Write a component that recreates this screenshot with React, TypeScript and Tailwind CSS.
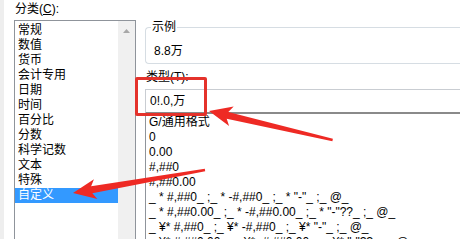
import React from 'react';

const categories = [
  '常规',
  '数值',
  '货币',
  '会计专用',
  '日期',
  '时间',
  '百分比',
  '分数',
  '科学记数',
  '文本',
  '特殊',
  '自定义',
];

const formats = [
  'G/通用格式',
  '0',
  '0.00',
  '#,##0',
  '#,##0.00',
  '_ * #,##0_ ;_ * -#,##0_ ;_ * "-"_ ;_ @_',
  '_ * #,##0.00_ ;_ * -#,##0.00_ ;_ * "-"??_ ;_ @_',
  '_ ¥* #,##0_ ;_ ¥* -#,##0_ ;_ ¥* "-"_ ;_ @_',
  '_ ¥* #,##0.00_ ;_ ¥* -#,##0.00_ ;_ ¥* "-"??_ ;_ @_',
];

function Arrow({ x, y, angle, length }: { x: number; y: number; angle: number; length: number }) {
  return (
    <g transform={`translate(${x},${y}) rotate(${angle})`}>
      <polygon
        points={`0,0 23,-10 19,-3.5 ${length},-1.2 ${length},1.2 19,3.5 23,10`}
        fill="#ee2a24"
      />
    </g>
  );
}

export default function App() {
  return (
    <div
      className="relative w-[460px] h-[239px] overflow-hidden bg-white text-[12px] leading-[15px] text-black"
      style={{ fontFamily: '"Liberation Sans", "Noto Sans CJK SC", sans-serif' }}
    >
      <div className="flex h-full">
        <div className="w-[4px] shrink-0 bg-[#eeeeee]" />
        {/* left: category */}
        <div className="ml-[10px] w-[122px] shrink-0 flex flex-col">
          <div className="h-[20px] shrink-0 pt-[2px] pl-[1px]">
            分类(<span className="underline">C</span>):
          </div>
          <div className="flex-1 flex border border-[#8f949b] border-b-0">
            <div className="flex-1 pt-[2px]">
              {categories.map((c) => (
                <div
                  key={c}
                  className={
                    c === '自定义'
                      ? 'h-[15px] pl-[3px] bg-[#3399ff] text-white'
                      : 'h-[15px] pl-[3px]'
                  }
                >
                  {c}
                </div>
              ))}
            </div>
            <div className="w-[17px] bg-[#f0f0f0] flex justify-center pt-[8px]">
              <svg width="7" height="4" viewBox="0 0 7 4">
                <polygon points="0,4 3.5,0 7,4" fill="#a8a8a8" />
              </svg>
            </div>
          </div>
        </div>

        {/* right */}
        <div className="ml-[9px] flex-1 min-w-0 flex flex-col">
          <div className="relative shrink-0 mt-[27px] h-[37px] border border-[#d6dde3] border-r-0 rounded-l-[4px]">
            <span className="absolute -top-[8px] left-[5px] bg-white px-[1px]">示例</span>
            <div className="pl-[8px] pt-[16px]">8.8万</div>
          </div>
          <div className="h-[25px] shrink-0 pl-[1px] pt-[6px]">类型(T):</div>
          <div className="h-[25px] shrink-0 border border-[#c9cdd2] border-r-0 border-b-2 border-b-[#8a8a8a] pl-[4px] pt-[4px]">
            0!.0,万
          </div>
          <div className="flex-1 min-h-0 overflow-hidden border-l border-[#8f949b] pl-[3px] pt-[1px] whitespace-nowrap">
            {formats.map((f) => (
              <div key={f} className="h-[15px]">
                {f}
              </div>
            ))}
          </div>
        </div>
      </div>

      {/* annotations */}
      <div className="absolute left-[135px] top-[77px] w-[72px] h-[39px] border-[3px] border-[#e4322b] rounded-[2px]" />
      <svg className="absolute left-0 top-0" width="460" height="239" viewBox="0 0 460 239">
        <Arrow x={209} y={111} angle={13.2} length={127} />
        <Arrow x={73} y={193} angle={-9.9} length={134} />
      </svg>
    </div>
  );
}
